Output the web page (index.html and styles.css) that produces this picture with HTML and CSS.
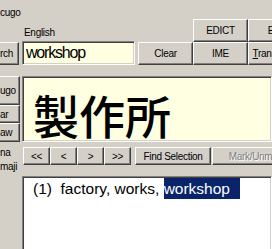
FILE: index.html
```html
<!DOCTYPE html>
<html lang="en">
<head>
    <meta charset="UTF-8">
    <meta name="viewport" content="width=device-width, initial-scale=1.0">
    <title>Dictionary</title>
    <link rel="stylesheet" href="styles.css">
</head>
<body>
    <div class="app">
        <div class="header">
            <div class="search-area">
                <div class="label label-top">cugo</div>
                <div class="label label-english">English</div>
                <div class="search-row">
                    <button class="btn btn-cut btn-search">rch</button>
                    <input class="search-input" type="text" value="workshop">
                    <button class="btn btn-clear">Clear</button>
                </div>
            </div>
            <div class="dict-grid">
                <button class="btn">EDICT</button>
                <button class="btn">Exit</button>
                <button class="btn">IME</button>
                <button class="btn"><u>T</u>ranslation</button>
            </div>
        </div>

        <div class="main">
            <div class="side">
                <button class="btn btn-cut btn-side btn-tall">ugo</button>
                <button class="btn btn-cut btn-side btn-short">ar</button>
                <button class="btn btn-cut btn-side btn-mid">aw</button>
                <div class="label side-label">na</div>
                <div class="label side-label side-label-last">maji</div>
            </div>

            <div class="content">
                <div class="kanji-box">製作所</div>
                <div class="nav-row">
                    <button class="btn btn-nav btn-first">&lt;&lt;</button>
                    <button class="btn btn-nav">&lt;</button>
                    <button class="btn btn-nav">&gt;</button>
                    <button class="btn btn-nav">&gt;&gt;</button>
                    <button class="btn btn-find">Find Selection</button>
                    <button class="btn btn-mark" disabled>Mark/Unmark</button>
                </div>
                <div class="results">
                    <div class="result-line">(1)&nbsp; factory, works, <span class="selected">workshop</span></div>
                </div>
            </div>
        </div>
    </div>
</body>
</html>
```

FILE: styles.css
```css
body {
    margin: 0;
    background-color: #d4d0c8;
    font-family: "Liberation Sans", Arial, sans-serif;
    font-size: 10px;
    letter-spacing: -0.3px;
    color: #000;
    width: 272px;
    height: 249px;
    overflow: hidden;
}

.app {
    display: flex;
    flex-direction: column;
}

.header {
    display: flex;
    height: 76px;
    flex-shrink: 0;
}

.search-area {
    width: 193px;
    flex-shrink: 0;
}

.label {
    height: 13px;
    line-height: 13px;
    white-space: nowrap;
}

.label-top {
    padding-top: 6px;
}

.label-english {
    margin-top: 7px;
    padding-left: 24px;
}

.search-row {
    display: flex;
    align-items: flex-start;
    margin-top: 2px;
    height: 24px;
}

.btn {
    box-sizing: border-box;
    background-color: #d4d0c8;
    border: 1px solid;
    border-color: #fff #404040 #404040 #fff;
    box-shadow: inset -1px -1px #808080;
    font: inherit;
    letter-spacing: inherit;
    color: #000;
    padding: 0;
    text-align: center;
    white-space: nowrap;
    overflow: hidden;
    flex-shrink: 0;
}

.btn-cut {
    border-left: 0;
    text-align: left;
}

.btn-search {
    width: 19px;
    height: 23px;
    margin-top: 1px;
}

.search-input {
    box-sizing: border-box;
    width: 113px;
    height: 24px;
    margin: 0 0 0 3px;
    padding: 0 0 0 3px;
    border: 1px solid;
    border-color: #808080 #fff #fff #808080;
    box-shadow: inset 1px 1px #404040, inset -1px -1px #d4d0c8;
    background-color: #ffffe1;
    font-family: "Liberation Sans", Arial, sans-serif;
    font-size: 16px;
    letter-spacing: -1.2px;
    color: #000;
    outline: none;
}

.btn-clear {
    width: 55px;
    height: 23px;
    margin-left: 3px;
    margin-top: 1px;
}

.dict-grid {
    display: grid;
    grid-template-columns: 55px 55px;
    grid-auto-rows: 23px;
    padding-top: 19px;
}

.main {
    display: flex;
}

.side {
    width: 20px;
    flex-shrink: 0;
    display: flex;
    flex-direction: column;
}

.btn-side {
    width: 20px;
}

.btn-tall {
    height: 29px;
}

.btn-short {
    height: 18px;
}

.btn-mid {
    height: 19px;
}

.side-label {
    margin-top: 4px;
}

.side-label-last {
    margin-top: 1px;
}

.content {
    width: 250px;
    margin-left: 2px;
    flex-shrink: 0;
    display: flex;
    flex-direction: column;
}

.kanji-box {
    box-sizing: border-box;
    height: 66px;
    flex-shrink: 0;
    padding: 14px 0 0 10px;
    border: 1px solid;
    border-color: #808080 #fff #fff #808080;
    box-shadow: inset 1px 1px #404040, inset -1px -1px #d4d0c8;
    background-color: #ffffe1;
    font-family: "Noto Sans CJK JP", sans-serif;
    font-size: 46px;
    font-weight: 500;
    line-height: 46px;
    letter-spacing: 0;
    white-space: nowrap;
    overflow: hidden;
}

.nav-row {
    display: flex;
    margin-top: 5px;
    height: 18px;
}

.btn-nav {
    width: 27px;
    height: 18px;
}

.btn-first {
    margin-left: 1px;
}

.btn-find {
    width: 76px;
    height: 18px;
    margin-left: 4px;
}

.btn-mark {
    width: 90px;
    height: 18px;
    margin-left: 1px;
    color: #808080;
    text-shadow: 1px 1px #fff;
}

.results {
    box-sizing: border-box;
    height: 90px;
    margin-top: 11px;
    padding: 1px 0 0 10px;
    border: 1px solid;
    border-color: #808080 #fff #fff #808080;
    box-shadow: inset 1px 1px #404040, inset -1px -1px #d4d0c8;
    background-color: #fff;
}

.result-line {
    font-family: "Liberation Sans", Arial, sans-serif;
    font-size: 15.5px;
    letter-spacing: 0;
    line-height: 21px;
    white-space: nowrap;
}

.selected {
    display: inline-block;
    background-color: #0a246a;
    color: #fff;
    padding-right: 10px;
}
```
